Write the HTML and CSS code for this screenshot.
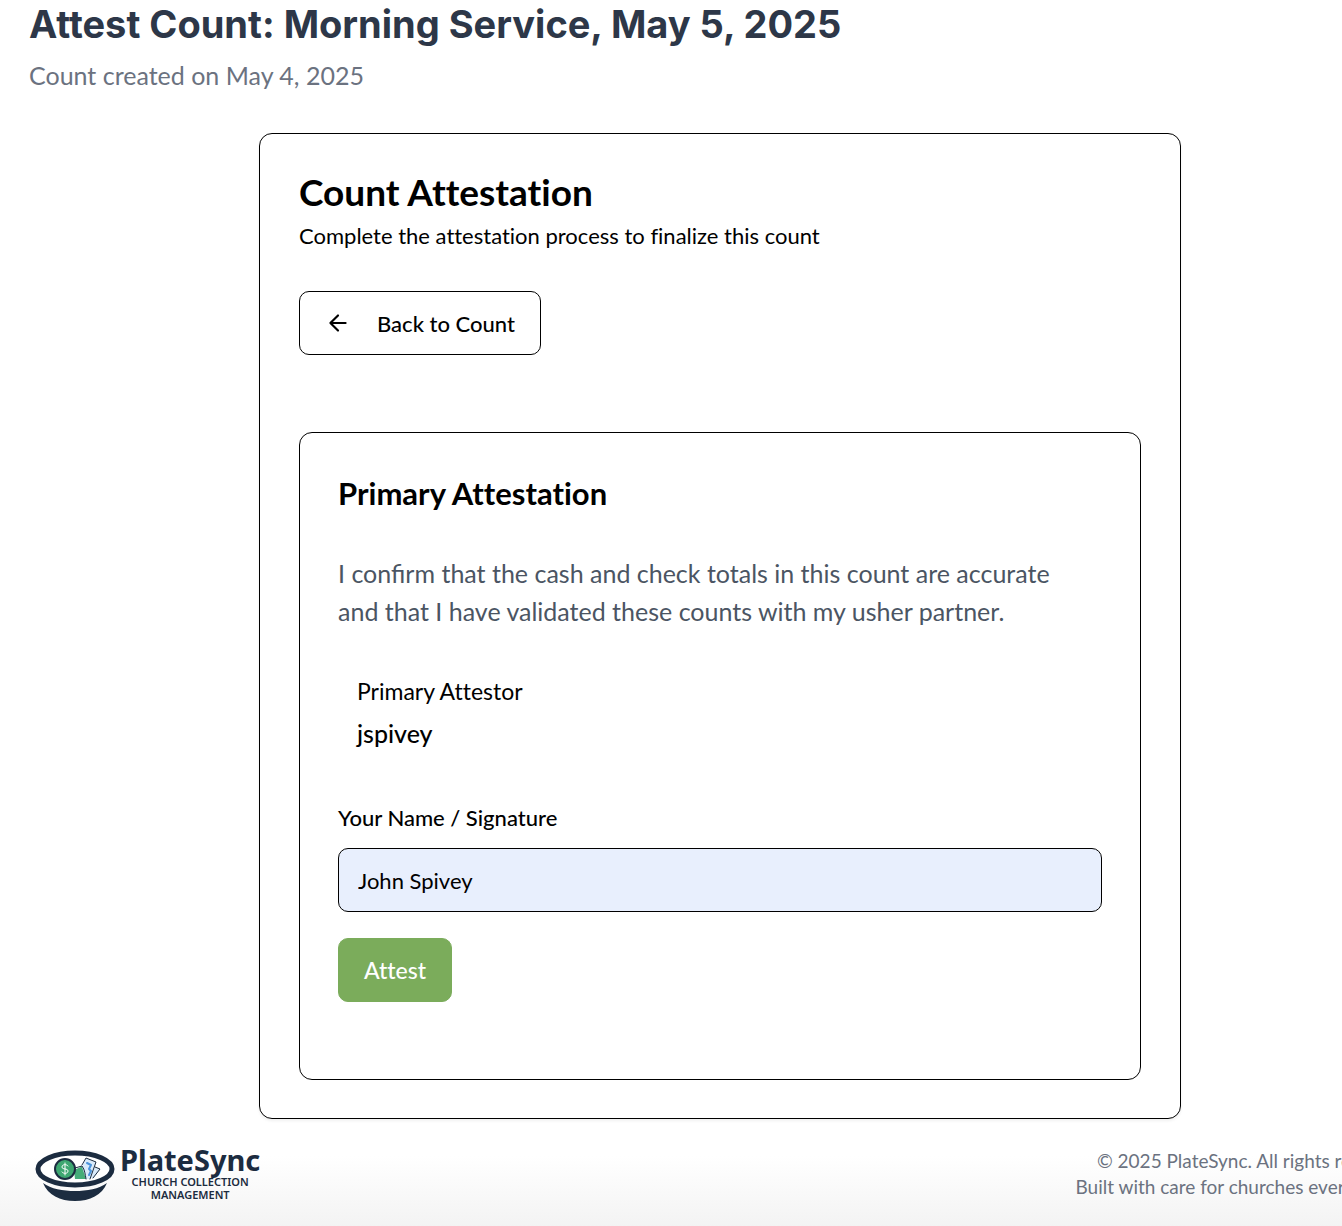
FILE: index.html
```html
<!DOCTYPE html>
<html lang="en">
<head>
<meta charset="utf-8">
<title>Attest Count - PlateSync</title>
<link rel="stylesheet" href="styles.css">
</head>
<body>
<div class="page">
  <header class="page-header">
    <h1 class="page-title">Attest Count: Morning Service, May 5, 2025</h1>
    <p class="page-subtitle">Count created on May 4, 2025</p>
  </header>
  <main class="card">
    <h2 class="card-title">Count Attestation</h2>
    <p class="card-description">Complete the attestation process to finalize this count</p>
    <button class="button button-outline" type="button">
      <svg class="button-icon" viewBox="0 0 24 24" aria-hidden="true"><path d="m12 19-7-7 7-7M19 12H5"/></svg>
      Back to Count
    </button>
    <section class="card card-inner">
      <h3 class="section-title">Primary Attestation</h3>
      <p class="statement">I confirm that the cash and check totals in this count are accurate and that I have validated these counts with my usher partner.</p>
      <div class="attestor">
        <p class="attestor-label">Primary Attestor</p>
        <p class="attestor-name">jspivey</p>
      </div>
      <form class="form">
        <label class="label" for="signature">Your Name / Signature</label>
        <input class="input" id="signature" type="text" value="John Spivey">
        <button class="button button-primary" type="button">Attest</button>
      </form>
    </section>
  </main>
  <footer class="footer">
    <div class="logo">
      <svg class="logo-mark" viewBox="0 0 80 52" aria-hidden="true">
        <path class="navy" d="M8 33C13 45 25 51 40 51s27-6 32-18C64 39 52 41 40 41S16 39 8 33Z"/>
        <ellipse class="bowl" cx="40" cy="19" rx="37" ry="16"/>
        <path class="bill-green" d="m39 20 9-4 3 13H40Z"/>
        <path class="bill-blue" d="m51 8 10 4-6 17h-4l-4-12Z"/>
        <path class="bill-detail" d="m52 13 4 2-2 4 2 2-2 4"/>
        <path class="bill-blue" d="m60 17 5 2-6 9h-4Z"/>
        <path class="bill-edge" d="m40 18 7-2c3 4 3 8 4 13M47 15l4-7 10 4-6 17M60 17l5 2-7 9"/>
        <circle class="coin" cx="30" cy="19" r="10"/>
        <path class="dollar" d="M33 16c-1-2-6-2-6 1s6 1 6 4-5 3-6 1M30 13v12"/>
      </svg>
      <div class="logo-text">
        <span class="logo-name">PlateSync</span>
        <span class="logo-tagline">CHURCH COLLECTION</span>
        <span class="logo-tagline">MANAGEMENT</span>
      </div>
    </div>
    <p class="copyright">© 2025 PlateSync. All rights reserved.<br>Built with care for churches everywhere.</p>
  </footer>
</div>
</body>
</html>
```
FILE: styles.css
```css
*, *::before, *::after { box-sizing: border-box; }
html { overflow: hidden; background: #fff; }
body { margin: 0; font-family: Lato, sans-serif; font-size: 25px; font-variant-ligatures: none; color: #000; }
h1, h2, h3, p { margin: 0; }
button, input { font: inherit; color: inherit; font-variant-ligatures: none; }

.page { min-width: 1440px; min-height: 100vh; padding: 0 29px; background: linear-gradient(to top, #f3f3f3, #fff 72px); }
.page-title { font-family: Inter, sans-serif; font-size: 38px; line-height: 48px; font-weight: 700; color: #2d3748; }
.page-subtitle { margin-top: 7px; line-height: 40px; color: #6b7280; }

.card { width: 922px; max-width: 100%; margin: 38px auto 0; padding: 38px 39px; border: 1px solid #000; border-radius: 13px; background: #fff; box-shadow: 0 2px 3px rgb(0 0 0 / 6%); }
.card-inner { width: auto; margin-top: 77px; padding: 38px 38px 77px; box-shadow: none; }
.card-title { font-size: 37px; line-height: 40px; font-weight: 700; }
.card-description { margin: 8px 0 39px; font-size: 22px; line-height: 32px; }
.section-title { line-height: 44px; font-size: 31px; font-weight: 700; }
.statement { margin-top: 39px; padding-right: 26px; line-height: 38px; font-variant-ligatures: normal; color: #4b5563; }
.attestor { margin-top: 45px; padding: 0 19px; }
.attestor-label { font-size: 23px; line-height: 32px; }
.attestor-name { margin-top: 7px; line-height: 38px; font-weight: 500; }
.form { display: flex; flex-direction: column; align-items: flex-start; margin-top: 52px; }
.label { font-size: 22px; line-height: 28px; font-weight: 500; }
.input { width: 100%; height: 64px; margin: 16px 0 26px; padding: 0 19px; border: 1px solid #000; border-radius: 10px; background: #e8effd; font-size: 22px; }

.button { display: inline-flex; align-items: center; height: 64px; padding: 0 25px; border: 1px solid #000; border-radius: 10px; background: #fff; font-size: 22px; font-weight: 500; }
.button-icon { width: 26px; height: 26px; margin-right: 26px; fill: none; stroke: currentColor; stroke-width: 2; stroke-linecap: round; stroke-linejoin: round; }
.button-primary { border-color: #7bac5b; background: #7bac5b; font-size: 23px; color: #fff; }

.footer { display: flex; justify-content: space-between; align-items: flex-start; padding: 26px 0; }
.logo { display: flex; gap: 5px; margin-left: 6px; color: #1c2c40; }
.logo-mark { width: 80px; height: 52px; margin-top: 5px; fill: none; stroke-linecap: round; stroke-linejoin: round; }
.logo-text { display: flex; flex-direction: column; align-items: center; font-family: "Noto Sans", sans-serif; }
.logo-name { font-size: 29px; line-height: 30px; font-weight: 700; }
.logo-tagline { font-size: 11px; line-height: 13px; font-weight: 600; }
.navy { fill: #1c2c40; }
.bowl { fill: #fff; stroke: #1c2c40; stroke-width: 5; }
.bill-green { fill: #45ad79; }
.bill-blue { fill: #d9eafa; }
.bill-detail { stroke: #4b94dc; stroke-width: 2; }
.bill-edge { stroke: #1c2c40; stroke-width: 1; }
.coin { fill: #3ea771; stroke: #1c2c40; stroke-width: 2; }
.dollar { stroke: #fff; stroke-width: 1; }
.copyright { margin-top: 3px; font-size: 19px; line-height: 26px; text-align: right; color: #6b7280; }
```
